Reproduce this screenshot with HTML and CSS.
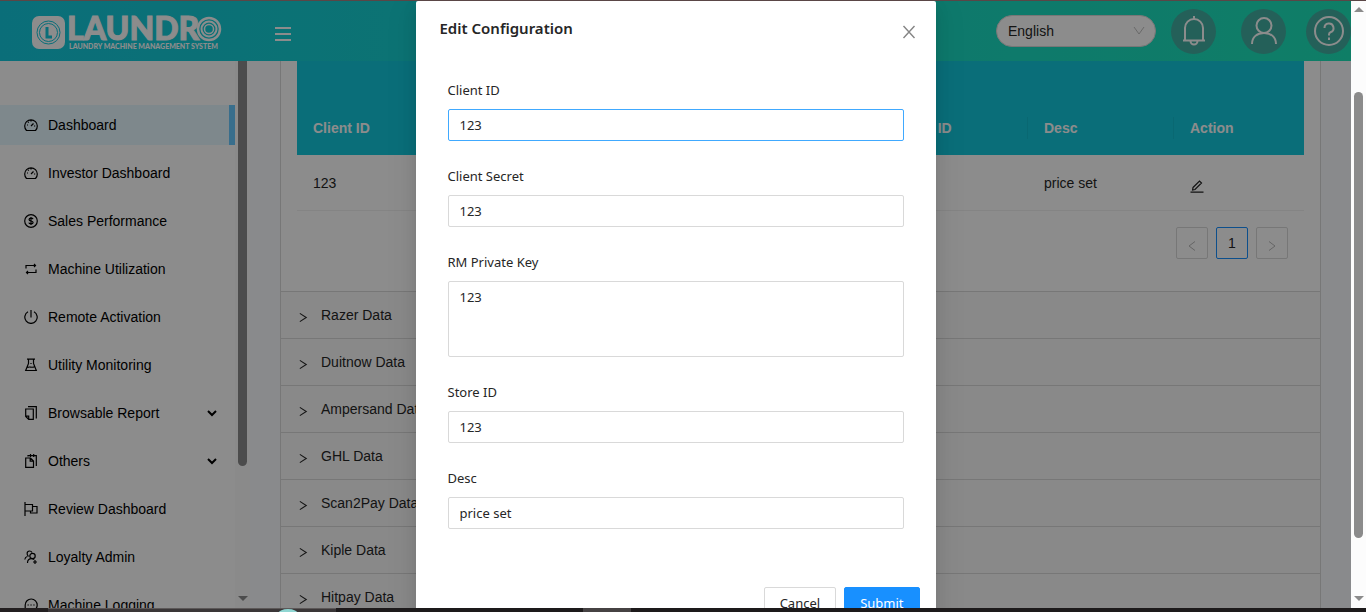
FILE: index.html
```html
<!DOCTYPE html>
<html lang="en">
<head>
  <meta charset="UTF-8">
  <meta name="viewport" content="width=device-width, initial-scale=1.0">
  <title>Laundro - Edit Configuration</title>
  <link rel="stylesheet" href="styles.css">
</head>
<body>
  <div class="screen">
    <div class="app">
      <header class="topbar">
        <a href="#" class="logo" aria-label="Laundro">
          <svg width="192" height="40" viewBox="0 0 192 40">
            <rect x="0" y="5" width="33" height="33" rx="7" fill="#fff"/>
            <circle cx="16.500" cy="21.500" r="11.500" fill="none" stroke="#13c9dd" stroke-width="1"/>
            <circle cx="16.500" cy="21.500" r="9" fill="none" stroke="#13c9dd" stroke-width="1"/>
            <path d="M15 16v10h5" fill="none" stroke="#13c9dd" stroke-width="3"/>
            <text x="35" y="29" class="logo-name">LAUNDR</text>
            <circle cx="177" cy="18" r="11" fill="none" stroke="#fff" stroke-width="2.500"/>
            <circle cx="177" cy="18" r="7.500" fill="none" stroke="#fff" stroke-width="2"/>
            <circle cx="177" cy="18" r="4.500" fill="none" stroke="#fff" stroke-width="1.500"/>
            <text x="37" y="38" class="logo-sub">LAUNDRY MACHINE MANAGEMENT SYSTEM</text>
          </svg>
        </a>
        <button class="menu-btn" aria-label="Toggle menu"><span></span><span></span><span></span></button>
        <div class="topbar-right">
          <div class="lang">
            <select aria-label="Language"><option>English</option></select>
            <svg width="12" height="12" viewBox="0 0 12 12"><path d="M1 2l5 7 5-7" fill="none" stroke="#bfbfbf"/></svg>
          </div>
          <button class="round bell" aria-label="Notifications">
            <svg width="32" height="32" viewBox="0 0 32 32" fill="none" stroke="#fff" stroke-width="2"><path d="M16 1v3M7 25V13a9 9 0 0 1 18 0v12M5 25.500h22M12.500 26a3.500 3.500 0 0 0 7 0"/></svg>
          </button>
          <button class="round user" aria-label="Account">
            <svg width="32" height="32" viewBox="0 0 32 32" fill="none" stroke="#fff" stroke-width="2"><circle cx="16" cy="10.500" r="7.500"/><path d="M4 29c0-7 5-11 12-11s12 4 12 11"/></svg>
          </button>
          <button class="round help" aria-label="Help">
            <svg width="32" height="32" viewBox="0 0 32 32" fill="none" stroke="#fff" stroke-width="2"><circle cx="16" cy="16" r="14"/><path d="M11.500 13a4.500 4.500 0 1 1 6 4.200c-1 .4-1.500 1-1.500 2.300v1M16 22.500v2.500"/></svg>
          </button>
        </div>
      </header>

      <div class="main">
        <aside class="sidebar">
          <nav class="nav">
            <a href="#" class="active"><svg viewBox="0 0 14 14"><path d="M2.500 12.500a6.300 6.300 0 1 1 9 0zM7 8l2.500-2.500M7 2.500v1M3 7h1M10 8h1.200M4 4l.7.7"/></svg>Dashboard</a>
            <a href="#"><svg viewBox="0 0 14 14"><path d="M2.500 12.500a6.300 6.300 0 1 1 9 0zM7 8l2.500-2.500M7 2.500v1M3 7h1M10 8h1.200M4 4l.7.7"/></svg>Investor Dashboard</a>
            <a href="#"><svg viewBox="0 0 14 14"><circle cx="7" cy="7" r="6.300"/><path d="M9 5.200C8.800 4.400 8 4.200 7 4.200c-2.600 0-2.600 2.500 0 2.800 2.800.3 2.800 2.900 0 2.900-1.200 0-2-.4-2.200-1.300M7 3v8"/></svg>Sales Performance</a>
            <a href="#"><svg viewBox="0 0 14 14"><path d="M2 6.500V3.500h9.500M10 2l1.500 1.500L10 5M12 7.500v3H2.500M4 9l-1.500 1.500L4 12"/></svg>Machine Utilization</a>
            <a href="#"><svg viewBox="0 0 14 14"><path d="M4 1.800a6.200 6.200 0 1 0 6 0M7 0v7.500"/></svg>Remote Activation</a>
            <a href="#"><svg viewBox="0 0 14 14"><path d="M3 1.200h8M4.500 1.200v4.300L1.700 12.500h10.600L9.500 5.500V1.200M3.500 9.500c2-1.500 4 .8 7-.8M7 5v1"/></svg>Utility Monitoring</a>
            <a href="#"><svg viewBox="0 0 14 14"><path d="M1.700 3h7.600v10.400H4.700l-3-3zM1.700 10.200h3v3.200M4 .6h8.300v12"/></svg>Browsable Report<svg class="caret" viewBox="0 0 10 10"><path d="M1 3l4 4 4-4"/></svg></a>
            <a href="#"><svg viewBox="0 0 14 14"><path d="M1.700 4h4.800L9.500 7v6.400H1.700zM6.200 4v3.200h3.300M4 2.500V1.600h8.300v10.400M6.500 0v3M9.700 0v3"/></svg>Others<svg class="caret" viewBox="0 0 10 10"><path d="M1 3l4 4 4-4"/></svg></a>
            <a href="#"><svg viewBox="0 0 14 14"><path d="M1 0v14M1 2.500h7.500v6.500H1M8.500 4.500H13v6.500H6.500V9"/></svg>Review Dashboard</a>
            <a href="#"><svg viewBox="0 0 14 14"><circle cx="8.500" cy="6" r="2.700"/><path d="M3.500 13c0-3 1.500-4.300 4-4.300 1.200 0 2 .3 2.700.8M11 10v4M9 12h4M4.500 6.500C2.500 5 2.500 1 5.500 1c1.200 0 2 .5 2.500 1.500M.8 9.500c.2-1.700 1-2.700 2.500-3"/></svg>Loyalty Admin</a>
            <a href="#"><svg viewBox="0 0 14 14"><path d="M1.200 13V7a6 6 0 1 1 5.800 6zM3.500 7h1.300M6.400 7h1.300M9.300 7h1.300"/></svg>Machine Logging</a>
          </nav>
          <div class="side-scroll"><div class="side-thumb"></div><div class="arrow-down"></div></div>
        </aside>

        <main class="content">
          <section class="collapse">
            <div class="panel-body">
              <table>
                <colgroup><col><col><col class="c3"><col class="c4"><col class="c5"><col class="c6"></colgroup>
                <thead>
                  <tr><th>Client ID</th><th>Client Secret</th><th>RM Private Key</th><th>Store ID</th><th>Desc</th><th>Action</th></tr>
                </thead>
                <tbody>
                  <tr><td>123</td><td>123</td><td>123</td><td>123</td><td>price set</td>
                    <td><button class="edit" aria-label="Edit"><svg width="14" height="14" viewBox="0 0 14 14"><path d="M3 8.500L9.500 2l2 2L5 10.500l-2.400.4zM0.500 13.200h13" fill="none" stroke="#222" stroke-width="1.200"/></svg></button></td></tr>
                </tbody>
              </table>
              <div class="pager">
                <button disabled aria-label="Previous page"><svg width="12" height="12" viewBox="0 0 12 12"><path d="M9 1.500L3 6l6 4.500"/></svg></button>
                <button class="current">1</button>
                <button disabled aria-label="Next page"><svg width="12" height="12" viewBox="0 0 12 12"><path d="M3 1.500L9 6l-6 4.500"/></svg></button>
              </div>
            </div>
            <button class="panel-head"><svg viewBox="0 0 12 12"><path d="M2 1.500L9 6l-7 4.500"/></svg>Razer Data</button>
            <button class="panel-head"><svg viewBox="0 0 12 12"><path d="M2 1.500L9 6l-7 4.500"/></svg>Duitnow Data</button>
            <button class="panel-head"><svg viewBox="0 0 12 12"><path d="M2 1.500L9 6l-7 4.500"/></svg>Ampersand Data</button>
            <button class="panel-head"><svg viewBox="0 0 12 12"><path d="M2 1.500L9 6l-7 4.500"/></svg>GHL Data</button>
            <button class="panel-head"><svg viewBox="0 0 12 12"><path d="M2 1.500L9 6l-7 4.500"/></svg>Scan2Pay Data</button>
            <button class="panel-head"><svg viewBox="0 0 12 12"><path d="M2 1.500L9 6l-7 4.500"/></svg>Kiple Data</button>
            <button class="panel-head"><svg viewBox="0 0 12 12"><path d="M2 1.500L9 6l-7 4.500"/></svg>Hitpay Data</button>
          </section>
        </main>
      </div>

      <div class="mask">
        <form class="modal" role="dialog" aria-labelledby="modalTitle">
          <div class="modal-head">
            <h2 id="modalTitle">Edit Configuration</h2>
            <button type="button" class="close" aria-label="Close"><svg width="14" height="14" viewBox="0 0 14 14"><path d="M1.500 1l11 12M12.500 1l-11 12" fill="none" stroke="#858585" stroke-width="1.400"/></svg></button>
          </div>
          <div class="modal-body">
            <div class="field"><label for="clientId">Client ID</label><input class="focused" type="text" id="clientId" value="123"></div>
            <div class="field"><label for="clientSecret">Client Secret</label><input type="text" id="clientSecret" value="123"></div>
            <div class="field"><label for="privateKey">RM Private Key</label><textarea id="privateKey" rows="3">123</textarea></div>
            <div class="field"><label for="storeId">Store ID</label><input type="text" id="storeId" value="123"></div>
            <div class="field"><label for="desc">Desc</label><input type="text" id="desc" value="price set"></div>
          </div>
          <div class="modal-foot">
            <button type="button" class="btn">Cancel</button>
            <button type="submit" class="btn primary">Submit</button>
          </div>
        </form>
      </div>
    </div>
    <div class="page-scroll"><div class="arrow-up"></div><div class="page-thumb"></div><div class="arrow-down"></div></div>
  </div>
  <footer class="taskbar"><span class="task-start"></span><span class="task-search"><i></i></span><span class="task-gap"></span><span class="task-app"></span></footer>
</body>
</html>
```

FILE: styles.css
```css
* { box-sizing: border-box; }
body { margin: 0; height: 100vh; display: flex; flex-direction: column; overflow: hidden; border-top: 1px solid #5a4646; font: 14px/22px "Liberation Sans", Arial, sans-serif; color: #262626; }
button, input, select, textarea { font: inherit; color: inherit; }
button { padding: 0; border: 0; background: none; cursor: pointer; }
a { color: #000; text-decoration: none; }
svg { display: block; flex: none; }

.screen { flex: 1; min-height: 0; display: flex; }
.app { flex: 1; min-width: 0; position: relative; display: flex; flex-direction: column; overflow: hidden; background: #f9fbff; }

/* top bar */
.topbar { flex: none; height: 60px; display: flex; align-items: center; padding-left: 32px; background: linear-gradient(90deg, #13c9dd, #1de5bb); }
.logo-name { font: 900 32px Lato, sans-serif; fill: #fff; stroke: #fff; stroke-width: 1px; }
.logo-sub { font: 900 7px Lato, sans-serif; fill: #fff; }
.menu-btn { margin: 6px 0 0 51px; width: 16px; display: flex; flex-direction: column; gap: 4px; }
.menu-btn span { height: 2px; background: #fff; }
.topbar-right { margin-left: auto; display: flex; align-items: center; }
.lang { position: relative; width: 160px; margin-right: 15px; }
.lang select { width: 100%; height: 32px; padding: 0 11px; appearance: none; background: #fff; border: 1px solid #d9d9d9; border-radius: 16px; }
.lang svg { position: absolute; right: 11px; top: 10px; }
.round { width: 45px; height: 45px; border-radius: 50%; background: #42b0a2; display: flex; align-items: center; justify-content: center; }
.user { margin: 0 20px 0 25px; }

.main { flex: 1; min-height: 0; display: flex; }

/* sidebar */
.sidebar { flex: none; width: 250px; display: flex; overflow: hidden; background: #fff; }
.nav { flex: 1; padding-top: 44px; }
.nav a { height: 40px; margin-bottom: 8px; padding: 0 18px 0 24px; display: flex; align-items: center; gap: 10px; }
.nav a.active { background: #e6f7ff; border-right: 6px solid #66c8ff; }
.nav svg { width: 14px; height: 14px; fill: none; stroke: #000; stroke-width: 1.200; }
.nav .caret { width: 10px; height: 10px; margin-left: auto; stroke-width: 2; }
.side-scroll { width: 15px; display: flex; flex-direction: column; align-items: center; justify-content: space-between; padding-bottom: 7px; background: #fcfcfc; }
.side-thumb { width: 9px; height: 75%; background: #8b8b8b; border-radius: 0 0 5px 5px; }
.arrow-down, .arrow-up { border: 5px solid transparent; }
.arrow-down { border-top-color: #8b8b8b; border-bottom: 0; }
.arrow-up { border-bottom-color: #8b8b8b; border-top: 0; }

/* content */
.content { flex: 1; min-width: 0; padding: 0 30px; overflow: hidden; }
.collapse { border: 1px solid #d9d9d9; border-top: 0; background: #fafafa; }
.panel-body { padding: 0 16px 32px; background: #fff; }
table { width: 100%; table-layout: fixed; border-collapse: separate; border-spacing: 0; }
.c3 { width: 180px; }
.c4, .c5 { width: 146px; }
.c6 { width: 130px; }
th { position: relative; padding: 56px 16px 16px; text-align: left; color: #fff; background: #13c9dd; }
th:not(:last-child)::after { content: ""; position: absolute; right: 0; bottom: 16px; width: 1px; height: 22px; background: rgba(0, 0, 0, 0.06); }
td { height: 56px; padding: 0 16px; border-bottom: 1px solid #f0f0f0; }
.edit { display: block; margin-top: 6px; }
.pager { display: flex; justify-content: flex-end; gap: 8px; padding: 16px 16px 0 0; }
.pager button { width: 32px; height: 32px; display: flex; align-items: center; justify-content: center; border: 1px solid #d9d9d9; border-radius: 2px; background: #fff; }
.pager button.current { border-color: #1890ff; }
.pager svg { margin-top: 6px; fill: none; stroke: #b8b8b8; }
.panel-head { width: 100%; height: 47px; display: flex; align-items: center; gap: 12px; padding-left: 17px; border-top: 1px solid #d9d9d9; }
.panel-head svg { width: 11px; height: 11px; margin-top: 4px; fill: none; stroke: #262626; stroke-width: 1.200; }

/* modal */
.mask { position: absolute; inset: 0; display: flex; align-items: flex-start; justify-content: center; background: rgba(0, 0, 0, 0.45); }
.modal { width: 520px; background: #fff; border-radius: 2px; font-family: "Noto Sans", sans-serif; font-size: 13px; box-shadow: 0 3px 6px -4px rgba(0, 0, 0, 0.12), 0 6px 16px rgba(0, 0, 0, 0.08), 0 9px 28px 8px rgba(0, 0, 0, 0.05); }
.modal-head { display: flex; align-items: flex-start; justify-content: space-between; height: 54px; padding: 16px 20px 0 24px; }
.modal-head h2 { margin: 0; font-size: 15px; line-height: 22px; font-weight: 600; }
.close { margin-top: 8px; }
.modal-body { padding: 24px 32px; }
.field { display: flex; flex-direction: column; gap: 8px; margin-bottom: 24px; }
.field input, .field textarea { width: 100%; margin: 0; padding: 4px 11px; border: 1px solid #d9d9d9; border-radius: 2px; outline: 0; background: #fff; resize: none; }
.field input { height: 32px; }
.field textarea { height: 76px; }
.field .focused { border-color: #40a9ff; }
.modal-foot { display: flex; justify-content: flex-end; gap: 8px; padding: 10px 16px; }
.btn { height: 32px; padding: 0 15px; border: 1px solid #d9d9d9; border-radius: 2px; background: #fff; }
.btn.primary { color: #fff; border-color: #1890ff; background: #1890ff; }

/* scrollbar and taskbar */
.page-scroll { flex: none; width: 15px; display: flex; flex-direction: column; align-items: center; padding: 6px 0 7px; background: #fcfcfc; }
.page-thumb { width: 9px; height: 75%; margin: 80px 0 auto; border-radius: 5px; background: #8b8b8b; }
.taskbar { flex: none; height: 4px; display: flex; background: #1d1a1b; }
.task-start { width: 48px; background: #231f20; }
.task-search { width: 288px; padding-left: 230px; overflow: hidden; background: #3a3637; border-top: 1px solid #5c5858; }
.task-search i { display: block; width: 20px; height: 10px; border-radius: 50%; background: #8fd6d2; }
.task-gap { width: 247px; }
.task-app { width: 48px; background: #464243; }
```
